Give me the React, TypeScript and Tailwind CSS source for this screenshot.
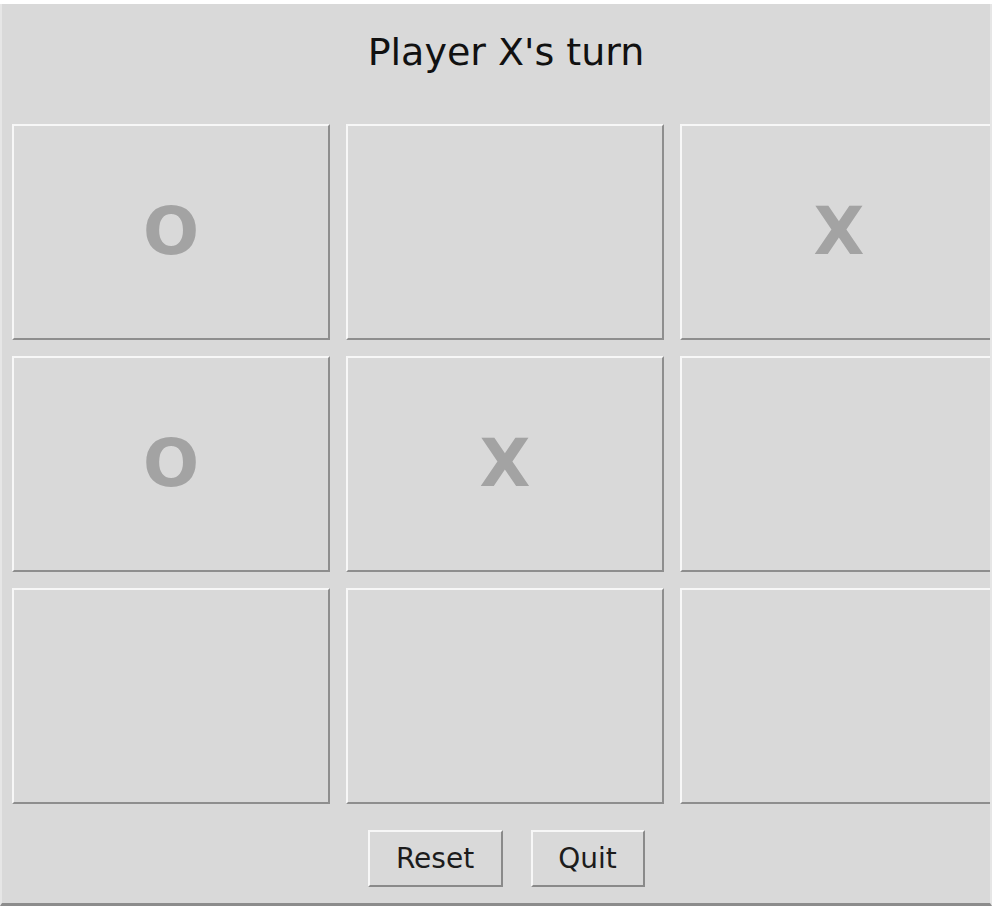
import React from "react";

const cells = ["O", "", "X", "O", "X", "", "", "", ""];

function Cell({ v }: { v: string }) {
  return (
    <div className="h-[216px] w-[318px] flex items-center justify-center border-t-2 border-l-2 border-r-2 border-b-2 border-t-[#f7f7f7] border-l-[#f7f7f7] border-r-[#8e8e8e] border-b-[#8e8e8e] bg-[#d9d9d9]">
      <span
        className="text-[66px] font-bold text-[#a3a3a3] leading-none"
        style={{ fontFamily: '"DejaVu Sans", sans-serif' }}
      >
        {v}
      </span>
    </div>
  );
}

function Btn({ label, w }: { label: string; w: string }) {
  return (
    <button
      className={`${w} h-[57px] flex items-center justify-center border-t-2 border-l-2 border-r-2 border-b-2 border-t-[#f7f7f7] border-l-[#f7f7f7] border-r-[#8a8a8a] border-b-[#8a8a8a] bg-[#d9d9d9] text-[28px] text-[#1c1c1c]`}
      style={{ fontFamily: '"DejaVu Sans", sans-serif' }}
    >
      {label}
    </button>
  );
}

export default function App() {
  return (
    <div className="w-[992px] h-[906px] bg-[#d9d9d9] flex flex-col overflow-hidden">
      <div className="h-[4px] bg-white shrink-0" />
      <div className="flex-1 border-l-2 border-r-2 border-b-[3px] border-l-[#e6e6e6] border-r-[#e6e6e6] border-b-[#8c8c8c] overflow-hidden">
        <div className="w-[1008px] flex flex-col">
          <div
            className="h-[96px] flex items-center justify-center text-[38px] text-[#111111]"
            style={{ fontFamily: '"DejaVu Sans", sans-serif' }}
          >
            Player X's turn
          </div>
          <div className="mt-[24px] px-[10px] grid grid-cols-[318px_318px_318px] gap-[16px]">
            {cells.map((v, i) => (
              <Cell key={i} v={v} />
            ))}
          </div>
          <div className="mt-[26px] flex justify-center gap-[28px]">
            <Btn label="Reset" w="w-[135px]" />
            <Btn label="Quit" w="w-[114px]" />
          </div>
        </div>
      </div>
    </div>
  );
}
